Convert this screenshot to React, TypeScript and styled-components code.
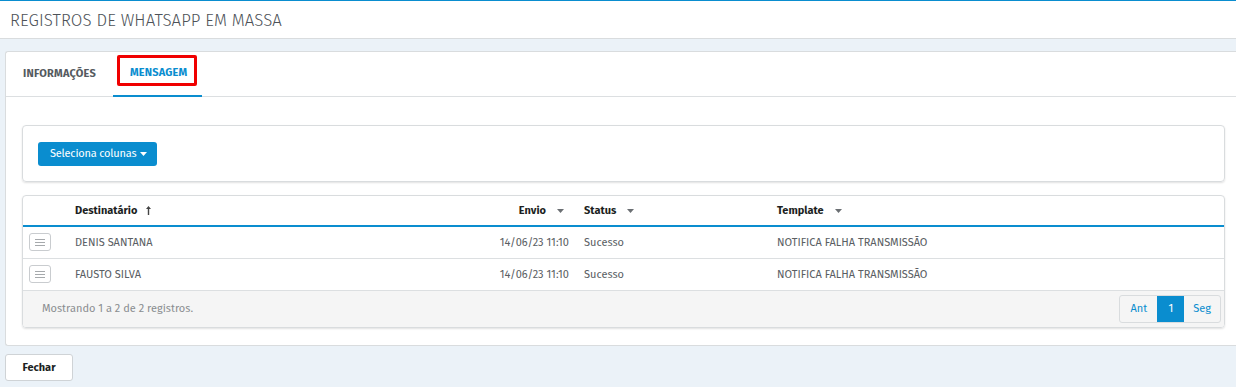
import { FC } from 'react'
import styled, { createGlobalStyle } from 'styled-components'

const GlobalStyle = createGlobalStyle`
  html, body {
    margin: 0;
    padding: 0;
    background: #ebf2f8;
    font-family: 'Fira Sans', 'Lato', 'Noto Sans', sans-serif;
  }
  * {
    box-sizing: border-box;
  }
`

interface Row {
  name: string
  sent: string
  status: string
  template: string
}

const rows: Row[] = [
  { name: 'DENIS SANTANA', sent: '14/06/23 11:10', status: 'Sucesso', template: 'NOTIFICA FALHA TRANSMISSÃO' },
  { name: 'FAUSTO SILVA', sent: '14/06/23 11:10', status: 'Sucesso', template: 'NOTIFICA FALHA TRANSMISSÃO' },
]

const Caret: FC = () => (
  <svg width="7" height="4" viewBox="0 0 7 4">
    <path d="M0 0 H7 L3.5 4 Z" fill="currentColor" />
  </svg>
)

const SortUp: FC = () => (
  <svg width="5" height="9" viewBox="0 0 5 9">
    <path d="M2.5 0 L5 3 H3.2 V9 H1.8 V3 H0 Z" fill="#444" />
  </svg>
)

const App: FC = () => {
  return (
    <>
      <GlobalStyle />
      <Page>
        <Header>
          <Title>REGISTROS DE WHATSAPP EM MASSA</Title>
        </Header>
        <Content>
          <Card>
            <Tabs>
              <Tab>INFORMAÇÕES</Tab>
              <Tab active>
                <Highlight>MENSAGEM</Highlight>
              </Tab>
            </Tabs>
            <CardBody>
              <Panel>
                <PrimaryButton>
                  Seleciona colunas <Caret />
                </PrimaryButton>
              </Panel>
              <TablePanel>
                <Table>
                  <colgroup>
                    <col style={{ width: 46 }} />
                    <col />
                    <col style={{ width: 88 }} />
                    <col style={{ width: 193 }} />
                    <col style={{ width: 453 }} />
                  </colgroup>
                  <thead>
                    <tr>
                      <Th />
                      <Th>
                        <HeadLabel>
                          Destinatário <SortUp />
                        </HeadLabel>
                      </Th>
                      <Th align="right">
                        <HeadLabel>
                          Envio <SortIcon><Caret /></SortIcon>
                        </HeadLabel>
                      </Th>
                      <Th>
                        <HeadLabel>
                          Status <SortIcon><Caret /></SortIcon>
                        </HeadLabel>
                      </Th>
                      <Th>
                        <HeadLabel>
                          Template <SortIcon><Caret /></SortIcon>
                        </HeadLabel>
                      </Th>
                    </tr>
                  </thead>
                  <tbody>
                    {rows.map((row) => (
                      <tr key={row.name}>
                        <Td>
                          <RowMenu>
                            <span />
                            <span />
                            <span />
                          </RowMenu>
                        </Td>
                        <Td>{row.name}</Td>
                        <Td align="right">{row.sent}</Td>
                        <Td>{row.status}</Td>
                        <Td>{row.template}</Td>
                      </tr>
                    ))}
                  </tbody>
                </Table>
                <Footer>
                  <Summary>Mostrando 1 a 2 de 2 registros.</Summary>
                  <Pagination>
                    <PageItem>Ant</PageItem>
                    <PageItem active>1</PageItem>
                    <PageItem>Seg</PageItem>
                  </Pagination>
                </Footer>
              </TablePanel>
            </CardBody>
          </Card>
          <CloseButton>Fechar</CloseButton>
        </Content>
      </Page>
    </>
  )
}

export default App

const Page = styled.div`
  width: 1236px;
  height: 387px;
  overflow: hidden;
`

const Header = styled.div`
  height: 39px;
  background: #fff;
  border-top: 1px solid #0a8dcf;
  border-bottom: 1px solid #d9dcde;
  display: flex;
  align-items: center;
  padding-left: 10px;
`

const Title = styled.h1`
  margin: 0;
  font-weight: 300;
  font-size: 16.8px;
  color: #4d5258;
  letter-spacing: 0.1px;
`

const Content = styled.div`
  padding: 12px 0 0 5px;
`

const Card = styled.div`
  background: #fff;
  border: 1px solid #d9dcde;
  border-right: none;
  border-radius: 3px 0 0 3px;
  height: 295px;
`

const Tabs = styled.div`
  height: 45px;
  border-bottom: 1px solid #dcdfe1;
  display: flex;
  padding-left: 0;
`

const Tab = styled.div<{ active?: boolean }>`
  height: 45px;
  padding: 0 ${({ active }) => (active ? '16px 0 17px' : '17px')};
  display: flex;
  align-items: center;
  font-size: 11px;
  font-weight: 700;
  letter-spacing: 0.2px;
  color: ${({ active }) => (active ? '#0a8dcf' : '#555a60')};
  border-bottom: 2px solid ${({ active }) => (active ? '#0a8dcf' : 'transparent')};
  margin-bottom: -1px;
`

const Highlight = styled.span`
  border: 3px solid #f00000;
  border-radius: 2px;
  padding: 8px 7px 4px 10px;
  margin: 0 -11px 6px -13px;
`

const CardBody = styled.div`
  padding: 28px 11px 0 16px;
  display: flex;
  flex-direction: column;
  gap: 13px;
`

const Panel = styled.div`
  height: 57px;
  border: 1px solid #d9dcde;
  border-radius: 4px;
  box-shadow: 0 1px 2px rgba(0, 0, 0, 0.12);
  display: flex;
  align-items: center;
  padding-left: 15px;
`

const PrimaryButton = styled.button`
  height: 24px;
  padding: 0 10px 0 12px;
  background: #0a8dcf;
  border: none;
  border-radius: 3px;
  color: #fff;
  font-family: inherit;
  font-size: 11px;
  font-weight: 400;
  letter-spacing: -0.2px;
  display: flex;
  align-items: center;
  gap: 4px;
`

const TablePanel = styled.div`
  border: 1px solid #d9dcde;
  border-radius: 4px;
  box-shadow: 0 1px 2px rgba(0, 0, 0, 0.12);
  overflow: hidden;
`

const Table = styled.table`
  width: 100%;
  border-collapse: collapse;
  table-layout: fixed;
  font-size: 11px;
`

const Th = styled.th<{ align?: 'left' | 'right' }>`
  height: 30px;
  padding: 0 ${({ align }) => (align === 'right' ? '14px' : '6px')} 0 6px;
  text-align: ${({ align }) => align || 'left'};
  font-weight: 700;
  color: #1c1f22;
  border-bottom: 2px solid #0a8dcf;
`

const HeadLabel = styled.span`
  display: inline-flex;
  align-items: center;
  gap: 9px;
`

const SortIcon = styled.span`
  color: #6b6f73;
  display: inline-flex;
  margin-left: 2px;
`

const Td = styled.td<{ align?: 'left' | 'right' }>`
  height: 32px;
  padding: 0 ${({ align }) => (align === 'right' ? '9px' : '6px')} 0 6px;
  text-align: ${({ align }) => align || 'left'};
  color: #5a5e63;
  border-bottom: 1px solid #dcdfe1;
  white-space: nowrap;
  &:first-child {
    padding: 0 0 0 6px;
  }
`

const RowMenu = styled.div`
  width: 22px;
  height: 18px;
  border: 1px solid #c9cccf;
  border-radius: 3px;
  display: flex;
  flex-direction: column;
  align-items: center;
  justify-content: center;
  gap: 2px;

  span {
    display: block;
    width: 10px;
    height: 1px;
    background: #a6a9ac;
  }
`

const Footer = styled.div`
  height: 36px;
  background: #f5f5f5;
  display: flex;
  align-items: center;
  justify-content: space-between;
  padding: 0 3px 0 19px;
`

const Summary = styled.span`
  font-size: 11px;
  color: #8a8d90;
`

const Pagination = styled.div`
  display: flex;
  height: 28px;
  border: 1px solid #d9dcde;
  border-radius: 3px;
  overflow: hidden;
`

const PageItem = styled.div<{ active?: boolean }>`
  padding: 0 9px;
  min-width: 27px;
  display: flex;
  align-items: center;
  justify-content: center;
  font-size: 11px;
  background: ${({ active }) => (active ? '#0a8dcf' : 'transparent')};
  color: ${({ active }) => (active ? '#fff' : '#0a8dcf')};

  &:first-child {
    padding: 0 10px 0 11px;
  }
`

const CloseButton = styled.button`
  margin-top: 8px;
  width: 68px;
  height: 27px;
  background: #fff;
  border: 1px solid #cfd3d6;
  border-radius: 3px;
  font-family: inherit;
  font-size: 11px;
  font-weight: 700;
  color: #1c1f22;
`
